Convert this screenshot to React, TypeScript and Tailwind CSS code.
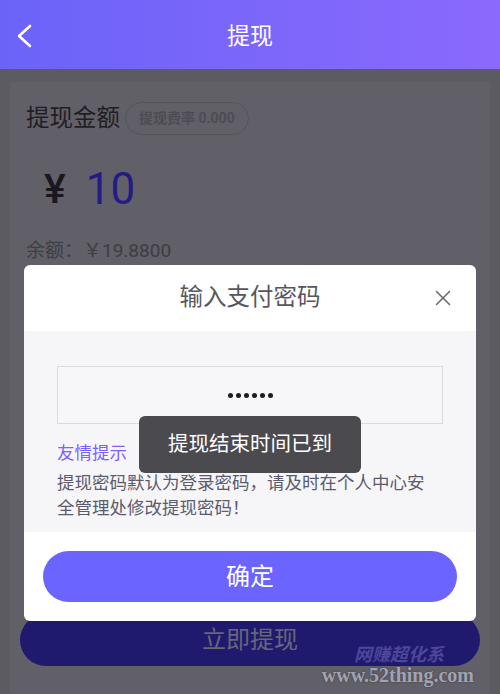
import { X } from "lucide-react";

function BackIcon() {
  return (
    <svg width="20" height="24" viewBox="0 0 20 24" fill="none">
      <path d="M15 2 L4 12 L15 22" stroke="white" strokeWidth="2.6" strokeLinecap="round" strokeLinejoin="round" />
    </svg>
  );
}

export default function App() {
  return (
    <div className="relative h-[694px] w-[500px] overflow-hidden bg-[#5c5b62] font-['Roboto','Noto_Sans_CJK_SC',sans-serif]">
      <header className="grid h-[69px] grid-cols-[60px_1fr_60px] items-center bg-linear-to-r from-[#6b63f8] to-[#8b69fd] pt-[3px]">
        <span className="pl-[15px]">
          <BackIcon />
        </span>
        <h1 className="text-center text-[23px] leading-none text-white">提现</h1>
        <span />
      </header>

      <section className="mx-[10px] mt-[13px] h-[620px] bg-[#615f67] px-4 pt-5">
        <div className="flex items-center gap-[5px]">
          <span className="text-[23.5px] leading-[33px] text-[#1f1e24]">提现金额</span>
          <span className="flex h-[33px] items-center rounded-full border border-[#55545b] px-[13px] text-[14px] font-bold text-[#4d4c54]">
            提现费率 0.000
          </span>
        </div>

        <div className="mt-[30px] flex items-center pl-[18px] leading-[48px]">
          <span className="text-[41px] font-medium text-[#19181e]">¥</span>
          <span className="ml-[20px] text-[44px] text-[#231b86]">10</span>
        </div>

        <p className="mt-[26px] text-[19px] leading-6 text-[#3e3d45]">余额：￥19.8800</p>

        <button className="mx-[-6px] mt-[351px] flex h-[52px] w-[460px] items-start justify-center rounded-full bg-[#201a6e] pt-[10px] text-[24px] leading-[32px] text-[#67667a]">
          立即提现
        </button>
      </section>

      <div className="absolute left-[24px] top-[265px] w-[452px] overflow-hidden rounded-md bg-white">
        <div className="relative flex h-[66px] items-center justify-center">
          <span className="text-[23.5px] text-[#57565d]">输入支付密码</span>
          <X className="absolute right-[20px] top-[20px] h-[26px] w-[26px] text-[#6a6970]" strokeWidth={1.4} />
        </div>
        <div className="bg-[#f6f6f9] px-[33px] pb-[11px] pt-[35px]">
          <div className="flex h-[58px] items-center justify-center gap-[3px] border border-[#d9d9df] bg-[#f7f7fa]">
            {[0, 1, 2, 3, 4, 5].map((i) => (
              <span key={i} className="h-[5px] w-[5px] rounded-full bg-[#1d1c24]" />
            ))}
          </div>
          <p className="mt-4 text-[17.5px] leading-[26px] text-[#7b60ff]">友情提示</p>
          <p className="mt-[5px] text-[17.5px] leading-[25px] text-[#5c5b6d]">
            提现密码默认为登录密码，请及时在个人中心安
            <br />
            全管理处修改提现密码！
          </p>
        </div>
        <div className="px-[19px] py-[19px]">
          <button className="flex h-[51px] w-full items-center justify-center rounded-full bg-[#6c64ff] text-[24px] text-white">
            确定
          </button>
        </div>
      </div>

      <div className="absolute left-1/2 top-[416px] flex h-[57px] w-[222px] -translate-x-1/2 items-center justify-center rounded-md bg-[#4b4a4f] text-[20.5px] text-white">
        提现结束时间已到
      </div>

      <div className="absolute bottom-[8px] right-[26px] flex flex-col items-end">
        <span className="mr-[30px] font-['Noto_Sans_CJK_SC',serif] text-[18px] font-bold italic leading-[22px] text-[#4c4798]">
          网赚超化系
        </span>
        <span className="font-['Liberation_Serif',serif] text-[20px] font-bold leading-[22px] text-[#a2a2b2] [text-shadow:0_0_2px_#3a3a44]">
          www.52thing.com
        </span>
      </div>
    </div>
  );
}
